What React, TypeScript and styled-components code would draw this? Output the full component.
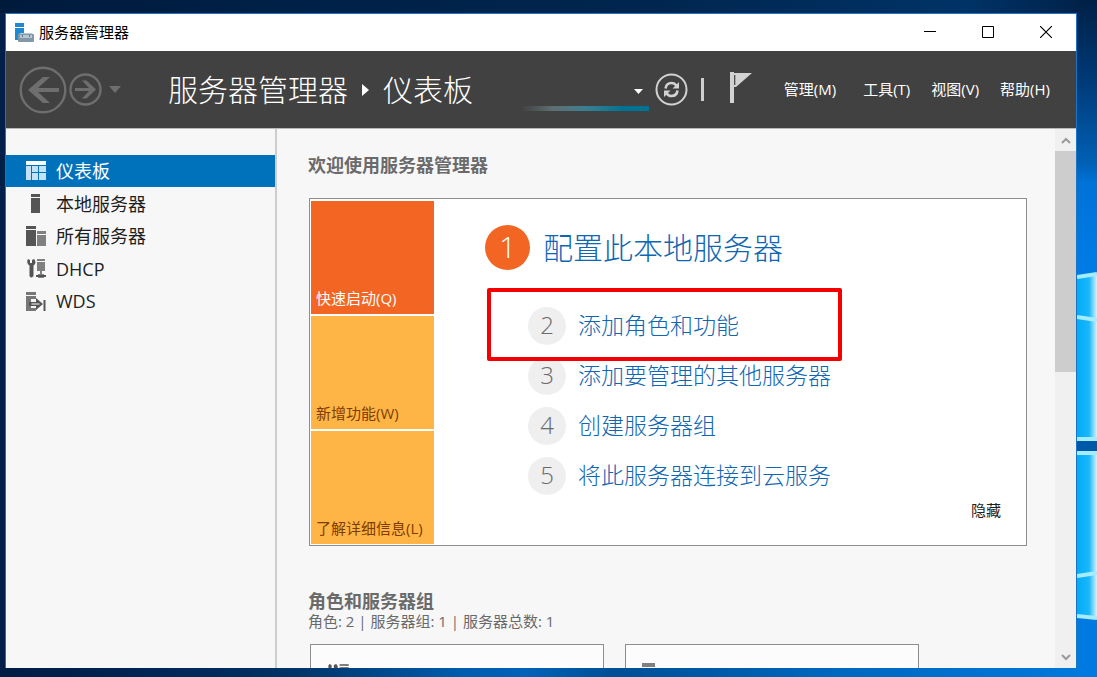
import React from "react";
import styled, { createGlobalStyle, css } from "styled-components";

const GlobalStyle = createGlobalStyle`
  *, *::before, *::after { box-sizing: border-box; }
  body {
    margin: 0;
    font-family: "Open Sans", "Noto Sans CJK SC", sans-serif;
    font-size: 15px;
    line-height: 20px;
    color: #1e1e1e;
  }
  h1, h2, p, ul, ol { margin: 0; padding: 0; }
  ul, ol { list-style: none; }
  button { font: inherit; color: inherit; background: none; border: 0; padding: 0; cursor: pointer; }
  a { color: inherit; text-decoration: none; }
  svg { display: block; flex: none; }
`;

const Desktop = styled.div`
  position: relative;
  height: 100vh;
  padding: 13px 20px 9px 5px;
  overflow: hidden;
  background:
    linear-gradient(90deg, #001c45 0, #002a5c 20%, #003468 27%, #005cae 42%, #0062b8 48%, #004f96 56%, #0066bd 75%, #007adf 100%) bottom / 100% 9px no-repeat,
    linear-gradient(90deg, #001a3c 0, #002148 30%, #00264f 60%, #003366 88%, #002046 100%) top / 100% 13px no-repeat,
    #001f49;
`;

const Wallpaper = styled.svg`
  position: absolute;
  top: 0;
  right: 0;
  width: 20px;
  height: 100%;
`;

const Window = styled.div`
  position: relative;
  display: flex;
  flex-direction: column;
  height: 100%;
  border: 1px solid #1c74c4;
  border-bottom-width: 0;
  background: #f7f7f7;
`;

const TitleBar = styled.div`
  display: flex;
  align-items: center;
  flex: none;
  height: 37px;
  padding: 0 1px 2px 8px;
  background: #fff;
  color: #000;
`;

const WindowTitle = styled.span`
  flex: 1;
  padding-left: 5px;
`;

const CaptionButton = styled.button`
  display: flex;
  align-items: center;
  justify-content: center;
  width: 58px;
  height: 35px;
`;

const Header = styled.header`
  display: flex;
  align-items: center;
  flex: none;
  height: 78px;
  padding: 0 26px 0 13px;
  background: #414141;
  border-bottom: 1px solid #b9b9b9;
  color: #fff;
`;

const History = styled.div`
  display: flex;
  align-items: center;
  gap: 2px;
  color: #6e6e6e;
`;

const HistoryMenu = styled.button`
  padding: 8px 5px;
`;

const Breadcrumb = styled.nav`
  display: flex;
  align-items: center;
  flex: 1;
  gap: 14px;
  padding-left: 42px;
  font-size: 30px;
  font-weight: 300;
  line-height: 40px;
  white-space: nowrap;
`;

const Picker = styled.button`
  display: flex;
  flex-direction: column;
  align-items: flex-end;
  gap: 12px;
  width: 128px;
  margin-top: 20px;
  svg { margin-right: 6px; }
  &::after {
    content: "";
    width: 100%;
    height: 5px;
    background: linear-gradient(90deg, #414141 0, #5f6e72 25%, #3d7f92 50%, #007394 80%);
  }
`;

const Refresh = styled.button`
  margin-left: 6px;
`;

const Divider = styled.span`
  width: 3px;
  height: 23px;
  margin: 0 26px 0 13px;
  background: #cfcfcf;
`;

const Flag = styled.button`
  padding-bottom: 4px;
`;

const Menus = styled.ul`
  display: flex;
  gap: 21px;
  margin-left: 32px;
  padding-bottom: 2px;
  white-space: nowrap;
  li:first-child { margin-right: 6px; }
`;

const Body = styled.div`
  display: flex;
  flex: 1;
  min-height: 0;
`;

const Sidebar = styled.nav`
  flex: none;
  width: 271px;
  padding-top: 26px;
  border-right: 2px solid #cdcdcd;
`;

const NavList = styled.ul`
  display: flex;
  flex-direction: column;
  justify-content: space-between;
  min-height: 162px;
`;

const NavLink = styled.a<{ $active?: boolean }>`
  display: flex;
  align-items: center;
  gap: 9px;
  height: 32px;
  padding-left: 20px;
  font-size: 18px;
  line-height: 32px;
  ${(p) => p.$active && css`
    background: #0072bc;
    color: #fff;
  `}
`;

const Main = styled.main`
  flex: 1;
  min-width: 0;
  overflow: hidden;
  padding: 24px 28px 0 31px;
`;

const Heading = styled.h2`
  font-size: 18px;
  line-height: 24px;
  font-weight: 700;
  color: #6a6a6a;
`;

const WelcomeCard = styled.section`
  display: flex;
  margin: 21px 0 43px 1px;
  padding: 2px 1px 1px;
  border: 1px solid #8e8e8e;
  background: #fff;
`;

const Tiles = styled.div`
  display: flex;
  flex-direction: column;
  flex: none;
  gap: 2px;
  width: 123px;
`;

const Tile = styled.button<{ $active?: boolean }>`
  display: flex;
  align-items: flex-end;
  height: 113px;
  padding: 0 5px 6px;
  background: ${(p) => (p.$active ? "#f26522" : "#ffb546")};
  color: ${(p) => (p.$active ? "#fff" : "#7d3c00")};
  white-space: nowrap;
`;

const Steps = styled.div`
  display: flex;
  flex-direction: column;
  flex: 1;
  padding: 24px 24px 0 51px;
`;

const StepList = styled.ol`
  display: flex;
  flex-direction: column;
  gap: 12px;
  padding: 37px 0 0 43px;
`;

const StepItem = styled.li`
  position: relative;
  display: flex;
`;

const Step = styled.a<{ $primary?: boolean }>`
  display: flex;
  align-items: center;
  gap: ${(p) => (p.$primary ? 13 : 12)}px;
  font-size: ${(p) => (p.$primary ? 30 : 23)}px;
  font-weight: 300;
  line-height: 36px;
  color: #0f66b2;
  white-space: nowrap;
`;

const StepLabel = styled.span`
  padding-bottom: 2px;
`;

const Badge = styled.span<{ $primary?: boolean }>`
  display: flex;
  align-items: center;
  justify-content: center;
  width: ${(p) => (p.$primary ? 45 : 38)}px;
  height: ${(p) => (p.$primary ? 45 : 38)}px;
  padding-bottom: 2px;
  border-radius: 50%;
  background: ${(p) => (p.$primary ? "#f26522" : "#efefef")};
  color: ${(p) => (p.$primary ? "#fff" : "#6a6a6a")};
  font-size: ${(p) => (p.$primary ? 30 : 24)}px;
`;

const Highlight = styled.span`
  position: absolute;
  z-index: 1;
  left: -41px;
  top: -19px;
  width: 355px;
  height: 73px;
  border: 4px solid #f40000;
  border-radius: 2px;
  pointer-events: none;
`;

const HideButton = styled.button`
  align-self: flex-end;
  margin-top: 5px;
`;

const Summary = styled.p`
  color: #6a6a6a;
  line-height: 16px;
`;

const Groups = styled.div`
  display: flex;
  gap: 21px;
  padding: 15px 0 0 2px;
`;

const GroupCard = styled.section`
  width: 294px;
  height: 120px;
  padding: 18px 16px;
  border: 1px solid #8e8e8e;
  background: #fcfcfc;
`;

const Scrollbar = styled.div`
  display: flex;
  flex-direction: column;
  flex: none;
  width: 21px;
  background: #f0f0f0;
`;

const ScrollButton = styled.button`
  display: flex;
  align-items: center;
  justify-content: center;
  height: 22px;
`;

const Track = styled.div`
  flex: 1;
`;

const Thumb = styled.div`
  height: 221px;
  background: #cdcdcd;
`;

const AppIcon = () => (
  <svg width="20" height="20" viewBox="0 0 20 20">
    <path d="M1 1h9v4H1zM1 6h9v5L4 13v5H1z" fill="#1f8ad2" />
    <path d="M6 11h12l2 3H4z" fill="#b9c8d2" />
    <rect x="4" y="12" width="16" height="8" rx="1" fill="#8298a8" />
    <path d="M6 13h12v3H6z" fill="#b7c6d0" />
    <path d="M8.500 13v2M15.500 13v2" stroke="#5e7482" />
  </svg>
);

const BackIcon = () => (
  <svg width="48" height="48" viewBox="0 0 48 48" fill="none" stroke="currentColor">
    <circle cx="24" cy="24" r="22.3" strokeWidth="2.4" />
    <path d="M9 24 24 11h7L19 22h21v4H19l12 11h-7z" fill="currentColor" stroke="none" />
  </svg>
);

const ForwardIcon = () => (
  <svg width="33" height="33" viewBox="0 0 33 33" fill="none" stroke="currentColor">
    <circle cx="16.5" cy="16.5" r="15" strokeWidth="2.4" />
    <path d="M27 16.500 17.500 25.500H13l7-7.400H6v-3.200h14l-7-7.400h4.500z" fill="currentColor" stroke="none" />
  </svg>
);

const Caret = ({ w, h }: { w: number; h: number }) => (
  <svg width={w} height={h} viewBox="0 0 10 6" preserveAspectRatio="none">
    <path d="M0 0h10L5 6z" fill="currentColor" />
  </svg>
);

const CrumbArrow = () => (
  <svg width="7" height="12" viewBox="0 0 7 12">
    <path d="M0 0v12l7-6z" fill="#fff" />
  </svg>
);

const RefreshIcon = () => (
  <svg width="33" height="33" viewBox="0 0 33 33" fill="none" stroke="#d2d2d2">
    <circle cx="16.500" cy="16.500" r="15" strokeWidth="2" />
    <path d="M10.500 15.500c.5-3.500 3-5.500 6-5.500 2.200 0 3.800 1 5 2.800M22.500 17.500c-.5 3.500-3 5.500-6 5.500-2.200 0-3.800-1-5-2.800" strokeWidth="2.600" />
    <path d="M24 9v6.500h-6.500zM9 24v-6.500h6.500z" fill="#d2d2d2" stroke="none" />
  </svg>
);

const FlagIcon = () => (
  <svg width="22" height="31" viewBox="0 0 22 31">
    <path d="M0 0h4v31H0z" fill="#d2d2d2" />
    <path d="M3 1h19L6 15H3z" fill="#d2d2d2" />
    <path d="M4.700 3v10" stroke="#414141" strokeWidth="1.200" />
  </svg>
);

const Chevron = ({ down }: { down?: boolean }) => (
  <svg width="10" height="7" viewBox="0 0 10 7" fill="none" stroke="#9a9a9a" strokeWidth="2">
    <path d={down ? "M1 1l4 4 4-4" : "M1 6l4-4 4 4"} />
  </svg>
);

const navIcons = {
  dashboard: (
    <>
      <path d="M0 0h20v4H0z" fill="#fff" />
      <path d="M0 5h5v14H0zM6 5h6v6H6zM13 5h7v6h-7zM6 12h6v7H6zM13 12h7v7h-7z" fill="#c4e2f5" />
    </>
  ),
  server: <path d="M5 1h9v3H5zM5 5h9v15H5z" fill="#555" />,
  servers: (
    <>
      <path d="M0 0h10v3H0zM0 4h10v16H0z" fill="#555" />
      <path d="M11 5h9v3h-9zM11 9h9v11h-9z" fill="#808080" />
    </>
  ),
  dhcp: (
    <>
      <path d="M2 1l2 1v3h2V2l2-1c2 2 2 5-.5 6.500V18q-2.500 3-4 0V7.500C1 6 .500 3 2 1z" fill="#555" />
      <path d="M11 1h8v2h-8zM11 4h8v9h-8zM14 13h2v3h-2zM12 16h6v4h-6z" fill="#808080" />
      <path d="M10 18h10" stroke="#555" strokeWidth="2" />
    </>
  ),
  wds: (
    <>
      <path d="M0 1h10v3H0zM0 5h10v3H5v9h5v3H0z" fill="#777" />
      <path d="M3 11h7V7l7 6-7 6v-4H3z" fill="#555" />
      <path d="M5.500 13h8" stroke="#fff" />
      <path d="M17.500 9h2v11h-2z" fill="#555" />
    </>
  ),
};

const navItems: { icon: keyof typeof navIcons; label: string }[] = [
  { icon: "dashboard", label: "仪表板" },
  { icon: "server", label: "本地服务器" },
  { icon: "servers", label: "所有服务器" },
  { icon: "dhcp", label: "DHCP" },
  { icon: "wds", label: "WDS" },
];

const menus = ["管理(M)", "工具(T)", "视图(V)", "帮助(H)"];
const tiles = ["快速启动(Q)", "新增功能(W)", "了解详细信息(L)"];
const steps = ["添加角色和功能", "添加要管理的其他服务器", "创建服务器组", "将此服务器连接到云服务"];

export default function App() {
  return (
    <Desktop>
      <GlobalStyle />
      <Wallpaper viewBox="0 0 20 677" preserveAspectRatio="none" aria-hidden="true">
        <defs>
          <linearGradient id="sky" x1="0" y1="0" x2="0" y2="1">
            <stop offset="0" stopColor="#002046" />
            <stop offset=".12" stopColor="#003a78" />
            <stop offset=".24" stopColor="#0060b4" />
            <stop offset=".27" stopColor="#0072d8" />
            <stop offset=".4" stopColor="#007ce6" />
            <stop offset="1" stopColor="#007ae0" />
          </linearGradient>
          <linearGradient id="pane" x1="0" y1="0" x2="1" y2="0">
            <stop offset="0" stopColor="#00acf8" />
            <stop offset=".6" stopColor="#1cb6fa" />
            <stop offset="1" stopColor="#d2f6ff" />
          </linearGradient>
        </defs>
        <path d="M0 0h20v677H0z" fill="url(#sky)" />
        <path d="M0 277l20-3v165H0zM0 452h20v167l-20-4z" fill="url(#pane)" />
        <path d="M0 277l20-3M0 317l20 3M0 439h20M0 453h20M0 576l20-3M0 616l20 2" stroke="#a4ecff" strokeWidth="4" />
        <path d="M0 441h20v10H0z" fill="#0058a8" />
      </Wallpaper>

      <Window>
        <TitleBar>
          <AppIcon />
          <WindowTitle>服务器管理器</WindowTitle>
          <CaptionButton aria-label="最小化">
            <svg width="12" height="12" viewBox="0 0 12 12"><path d="M0 5.500h12" stroke="#000" /></svg>
          </CaptionButton>
          <CaptionButton aria-label="最大化">
            <svg width="12" height="12" viewBox="0 0 12 12"><path d="M.500 .500h11v11H.500z" fill="none" stroke="#000" /></svg>
          </CaptionButton>
          <CaptionButton aria-label="关闭">
            <svg width="12" height="12" viewBox="0 0 12 12"><path d="M0 0l12 12M12 0L0 12" stroke="#000" strokeWidth="1.200" /></svg>
          </CaptionButton>
        </TitleBar>

        <Header>
          <History>
            <button aria-label="后退"><BackIcon /></button>
            <button aria-label="前进"><ForwardIcon /></button>
            <HistoryMenu aria-label="历史记录"><Caret w={12} h={7} /></HistoryMenu>
          </History>
          <Breadcrumb>
            <a href="#manager">服务器管理器</a>
            <CrumbArrow />
            <a href="#dashboard">仪表板</a>
          </Breadcrumb>
          <Picker aria-label="选择"><Caret w={9} h={5} /></Picker>
          <Refresh aria-label="刷新"><RefreshIcon /></Refresh>
          <Divider />
          <Flag aria-label="通知"><FlagIcon /></Flag>
          <Menus>
            {menus.map((m) => <li key={m}><button>{m}</button></li>)}
          </Menus>
        </Header>

        <Body>
          <Sidebar>
            <NavList>
              {navItems.map((item, i) => (
                <li key={item.label}>
                  <NavLink href={`#${item.icon}`} $active={i === 0}>
                    <svg width="21" height="21" viewBox="0 0 21 21">{navIcons[item.icon]}</svg>
                    {item.label}
                  </NavLink>
                </li>
              ))}
            </NavList>
          </Sidebar>

          <Main>
            <Heading>欢迎使用服务器管理器</Heading>
            <WelcomeCard>
              <Tiles>
                {tiles.map((t, i) => <Tile key={t} $active={i === 0}>{t}</Tile>)}
              </Tiles>
              <Steps>
                <Step href="#configure" $primary>
                  <Badge $primary>1</Badge>
                  配置此本地服务器
                </Step>
                <StepList>
                  {steps.map((s, i) => (
                    <StepItem key={s}>
                      <Step href={`#step-${i + 2}`}>
                        <Badge>{i + 2}</Badge>
                        <StepLabel>{s}</StepLabel>
                      </Step>
                      {i === 0 && <Highlight />}
                    </StepItem>
                  ))}
                </StepList>
                <HideButton>隐藏</HideButton>
              </Steps>
            </WelcomeCard>

            <Heading>角色和服务器组</Heading>
            <Summary>角色: 2 | 服务器组: 1 | 服务器总数: 1</Summary>
            <Groups>
              <GroupCard>
                <svg width="24" height="21" viewBox="0 0 21 21" preserveAspectRatio="none">{navIcons.dhcp}</svg>
              </GroupCard>
              <GroupCard>
                <svg width="21" height="21" viewBox="0 0 21 21"><path d="M0 0h13v4H0zM0 5h13v15H0z" fill="#808080" /></svg>
              </GroupCard>
            </Groups>
          </Main>

          <Scrollbar>
            <ScrollButton aria-label="向上滚动"><Chevron /></ScrollButton>
            <Track><Thumb /></Track>
            <ScrollButton aria-label="向下滚动"><Chevron down /></ScrollButton>
          </Scrollbar>
        </Body>
      </Window>
    </Desktop>
  );
}
